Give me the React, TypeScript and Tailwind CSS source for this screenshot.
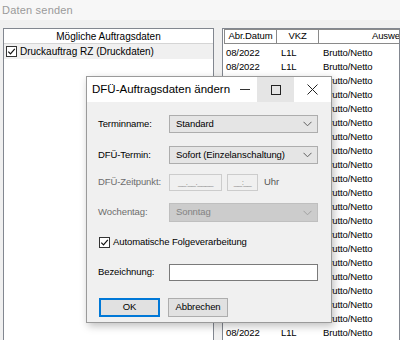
import React from 'react';

const font = { fontFamily: '"Liberation Sans", Arial, sans-serif' };

const rows = Array.from({ length: 22 });

const Chevron: React.FC<{ color?: string }> = ({ color = '#606060' }) => (
  <svg width="9" height="6" viewBox="0 0 9 6" className="shrink-0">
    <path d="M0.5 0.8 L4.5 4.8 L8.5 0.8" fill="none" stroke={color} strokeWidth="1" />
  </svg>
);

const Check: React.FC = () => (
  <svg width="11" height="11" viewBox="0 0 11 11" className="shrink-0">
    <rect x="0.5" y="0.5" width="10" height="10" fill="#fff" stroke="#333" />
    <path d="M2.3 5.6 L4.5 7.8 L8.8 2.8" fill="none" stroke="#111" strokeWidth="1.2" />
  </svg>
);

export default function App() {
  return (
    <div className="w-[400px] h-[340px] overflow-hidden relative bg-[#f0f0f0] text-[9.5px] tracking-[-0.1px] text-black" style={font}>
      {/* main window title */}
      <div className="h-[20px] bg-[#f7f7f7] flex items-center pl-[2px] text-[11px] tracking-[0.2px] text-[#9a9a9a]">
        Daten senden
      </div>

      {/* main body */}
      <div className="flex pl-[3px] pt-[8px] gap-[8px]">
        {/* left list */}
        <div className="w-[211px] h-[330px] bg-white border border-[#828790] shrink-0">
          <div className="h-[15px] border-b border-[#d5d5d5] flex items-center justify-center bg-white text-[10px] tracking-normal">
            Mögliche Auftragsdaten
          </div>
          <div className="h-[15px] flex items-center pl-[2px] gap-[3px] bg-[#f0f0f0] text-[10px] tracking-normal">
            <Check />
            <span>Druckauftrag RZ (Druckdaten)</span>
          </div>
        </div>

        {/* right list */}
        <div className="flex-1 h-[330px] bg-white border border-[#828790] pl-[1px] overflow-hidden">
          <div className="flex h-[15px] whitespace-nowrap">
            <div className="w-[53px] shrink-0 border border-[#8a8a8a] flex items-center justify-center">Abr.Datum</div>
            <div className="w-[42px] shrink-0 border border-l-0 border-[#8a8a8a] flex items-center justify-center">VKZ</div>
            <div className="w-[156px] shrink-0 border border-l-0 border-[#8a8a8a] flex items-center justify-center">Auswertung</div>
          </div>
          <div className="pt-[2px]">
            {rows.map((_, i) => (
              <div key={i} className="flex h-[14px] items-center whitespace-nowrap">
                <div className="w-[53px] shrink-0 pl-[2px]">08/2022</div>
                <div className="w-[42px] shrink-0 pl-[4px]">L1L</div>
                <div className="pl-[4px]">Brutto/Netto</div>
              </div>
            ))}
          </div>
        </div>
      </div>

      {/* dialog */}
      <div className="absolute left-[86px] top-[76px] w-[246px] h-[247px] border border-[#9a9a9a] bg-[#f0f0f0] shadow-[2px_3px_8px_rgba(0,0,0,0.25)] flex flex-col">
        <div className="h-[25px] bg-white flex items-center shrink-0">
          <span className="pl-[5px] text-[11.5px] tracking-normal flex-1">DFÜ-Auftragsdaten ändern</span>
          <div className="w-[24px] h-full flex items-center justify-center">
            <div className="w-[10px] h-[1px] bg-[#333]" />
          </div>
          <div className="w-[37px] h-full flex items-center justify-center bg-[#e5e5e5]">
            <div className="w-[10px] h-[10px] border border-[#222]" />
          </div>
          <div className="w-[37px] h-full flex items-center justify-center">
            <svg width="11" height="11" viewBox="0 0 11 11">
              <path d="M0.5 0.5 L10.5 10.5 M10.5 0.5 L0.5 10.5" stroke="#222" strokeWidth="1" />
            </svg>
          </div>
        </div>

        <div className="flex flex-col pl-[11px] pr-[13px] pt-[13px]">
          <div className="flex items-center h-[18px]">
            <span className="w-[71px] shrink-0">Terminname:</span>
            <div className="flex-1 h-full bg-[#e5e5e5] border border-[#adadad] flex items-center justify-between pl-[6px] pr-[5px]">
              <span>Standard</span>
              <Chevron />
            </div>
          </div>

          <div className="flex items-center h-[18px] mt-[13px]">
            <span className="w-[71px] shrink-0">DFÜ-Termin:</span>
            <div className="flex-1 h-full bg-[#e5e5e5] border border-[#adadad] flex items-center justify-between pl-[6px] pr-[5px]">
              <span>Sofort (Einzelanschaltung)</span>
              <Chevron />
            </div>
          </div>

          <div className="flex items-center h-[17px] mt-[10px] text-[#6d6d6d]">
            <span className="w-[71px] shrink-0">DFÜ-Zeitpunkt:</span>
            <div className="w-[53px] h-full border border-[#cccccc] flex items-center justify-center text-[#8a8a8a] text-[8px] tracking-[-0.5px] overflow-hidden">__.__.____</div>
            <div className="w-[31px] h-full ml-[5px] border border-[#cccccc] flex items-center justify-center text-[#8a8a8a] text-[8px] tracking-[-0.5px] overflow-hidden">__:__</div>
            <span className="ml-[6px] text-[#555]">Uhr</span>
          </div>

          <div className="flex items-center h-[19px] mt-[12px]">
            <span className="w-[71px] shrink-0 text-[#6d6d6d]">Wochentag:</span>
            <div className="flex-1 h-full bg-[#cccccc] border border-[#bfbfbf] flex items-center justify-between pl-[6px] pr-[5px] text-[#838383]">
              <span>Sonntag</span>
              <Chevron color="#a0a0a0" />
            </div>
          </div>

          <div className="flex items-center h-[11px] mt-[15px] gap-[3px] pl-[1px]">
            <Check />
            <span>Automatische Folgeverarbeitung</span>
          </div>

          <div className="flex items-center h-[17px] mt-[16px]">
            <span className="w-[71px] shrink-0">Bezeichnung:</span>
            <div className="flex-1 h-full bg-white border border-[#7a7a7a]" />
          </div>

          <div className="flex items-center h-[19px] mt-[17px] gap-[8px] pl-[1px]">
            <div className="w-[61px] h-full bg-[#e1e1e1] border-2 border-[#0078d7] flex items-center justify-center">OK</div>
            <div className="w-[60px] h-full bg-[#e1e1e1] border border-[#adadad] flex items-center justify-center">Abbrechen</div>
          </div>
        </div>
      </div>
    </div>
  );
}
